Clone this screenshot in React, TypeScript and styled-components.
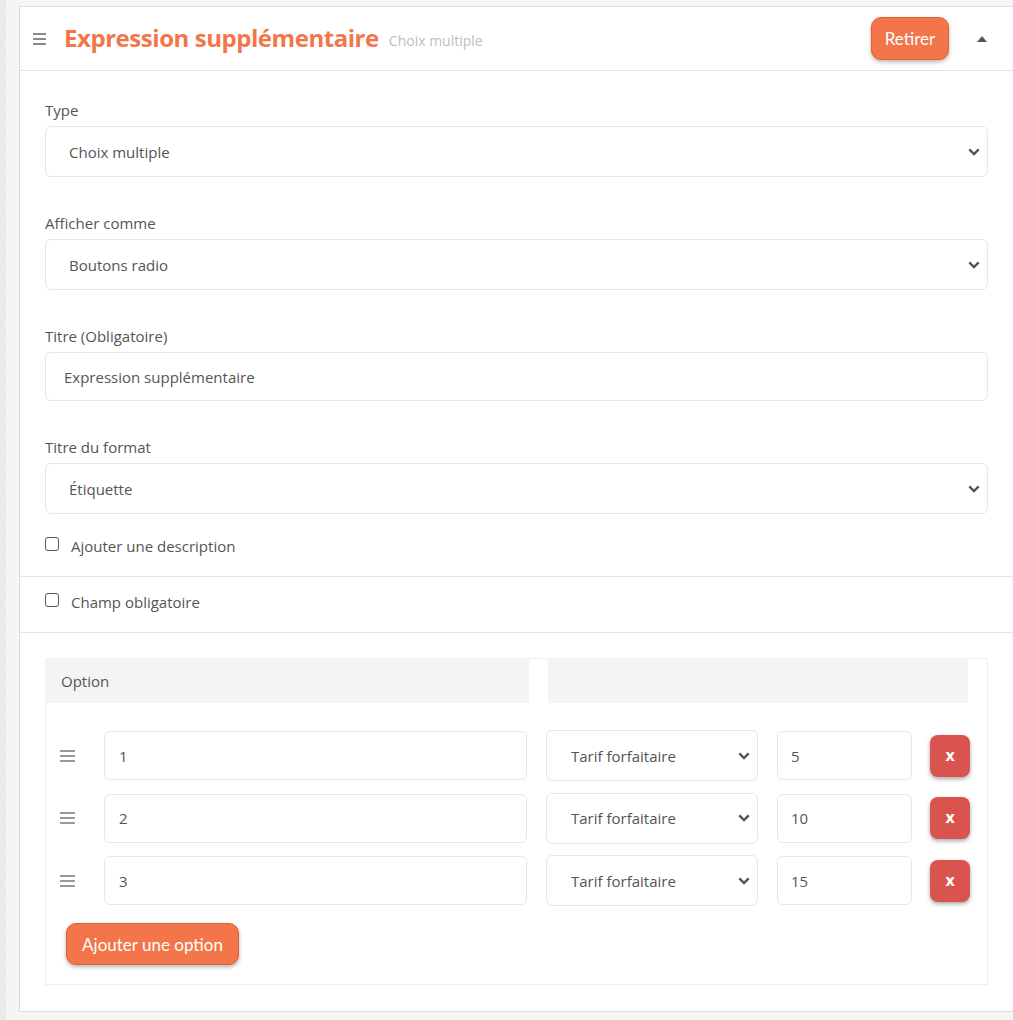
import React from "react";
import styled, { createGlobalStyle } from "styled-components";

const Global = createGlobalStyle`
  html, body { margin: 0; padding: 0; }
  body {
    background: #f5f5f5;
    font-family: "Open Sans", "Noto Sans", sans-serif;
    color: #555;
    overflow: hidden;
  }
`;

const Page = styled.div`
  display: flex;
  width: 1013px;
  height: 1020px;
  overflow: hidden;
`;

const Strip = styled.div`
  width: 6px;
  flex: none;
  background: repeating-linear-gradient(45deg, #e6e6e6 0 1px, #efefef 1px 2px);
`;

const Main = styled.div`
  flex: none;
  padding: 6px 0 0 13px;
`;

const Card = styled.section`
  width: 1000px;
  background: #fff;
  border: 1px solid #dedede;
  box-sizing: border-box;
`;

const Header = styled.header`
  display: flex;
  align-items: center;
  height: 63px;
  padding: 0 0 0 13px;
  border-bottom: 1px solid #e2e2e2;
`;

const Title = styled.h2`
  margin: -2px 0 0 18px;
  font-family: "Open Sans", sans-serif;
  font-weight: 700;
  font-size: 24px;
  letter-spacing: -0.45px;
  color: #f2764a;
  line-height: 1;
`;

const Subtitle = styled.span`
  margin-left: 10px;
  margin-top: 3px;
  font-size: 14px;
  color: #bdbdbd;
`;

const Spacer = styled.div`
  flex: 1;
`;

const OrangeButton = styled.button<{ $w: number; $h: number }>`
  width: ${(p) => p.$w}px;
  height: ${(p) => p.$h}px;
  background: #f2764a;
  border: 1px solid #e0603a;
  border-radius: 10px;
  color: #fff;
  font-family: Lato, sans-serif;
  font-size: 17px;
  box-shadow: 0 2px 4px rgba(0, 0, 0, 0.3);
  padding: 0;
  cursor: pointer;
`;

const Caret = styled.span`
  width: 0;
  height: 0;
  margin: 0 31px 0 28px;
  border-left: 5px solid transparent;
  border-right: 5px solid transparent;
  border-bottom: 6px solid #555;
`;

const Body = styled.div`
  padding: 28px 30px 0 25px;
`;

const Field = styled.div`
  display: flex;
  flex-direction: column;
  gap: 5px;
  & + & {
    margin-top: 35px;
  }
`;

const Label = styled.label`
  font-size: 15px;
  line-height: 22px;
  color: #555;
`;

const chevron = `url("data:image/svg+xml;utf8,<svg xmlns='http://www.w3.org/2000/svg' width='12' height='8' viewBox='0 0 12 8'><path d='M1.3 1.3 L6 6 L10.7 1.3' fill='none' stroke='%23555' stroke-width='2.4'/></svg>")`;

const Select = styled.select<{ $pad?: number; $w?: number }>`
  appearance: none;
  width: ${(p) => (p.$w ? `${p.$w}px` : "100%")};
  height: 51px;
  box-sizing: border-box;
  border: 1px solid #e6e6ee;
  border-radius: 6px;
  background: #fff ${chevron} no-repeat right 7px center / 12px 8px;
  padding: 0 20px 0 ${(p) => p.$pad ?? 23}px;
  font-family: "Open Sans", sans-serif;
  font-size: 15px;
  color: #555;
  outline: none;
`;

const Input = styled.input<{ $pad?: number }>`
  width: 100%;
  height: 49px;
  box-sizing: border-box;
  border: 1px solid #e6e6ee;
  border-radius: 6px;
  background: #fff;
  padding: 0 10px 0 ${(p) => p.$pad ?? 18}px;
  font-family: "Open Sans", sans-serif;
  font-size: 15px;
  color: #555;
  outline: none;
`;

const CheckRow = styled.label<{ $top: number; $bottom: number }>`
  display: flex;
  align-items: center;
  gap: 12px;
  padding: ${(p) => p.$top}px 0 ${(p) => p.$bottom}px;
  font-size: 15px;
  line-height: 22px;
  color: #555;
`;

const CheckBox = styled.input`
  appearance: none;
  width: 14px;
  height: 14px;
  margin: -4px 0 0;
  border: 1.5px solid #555;
  border-radius: 3px;
  box-sizing: border-box;
  background: #fff;
`;

const Divider = styled.div`
  border-top: 1px solid #e4e4e4;
`;

const SectionPad = styled.div`
  padding: 0 30px 0 25px;
`;

const OptionsWrap = styled.div`
  margin: 25px 30px 26px 25px;
  border: 1px solid #eeeeee;
  padding-bottom: 19px;
`;

const HeadRow = styled.div`
  display: grid;
  grid-template-columns: 484px 420px;
  column-gap: 19px;
  margin: -1px 0 0 -1px;
`;

const HeadCell = styled.div`
  height: 45px;
  background: #f4f4f4;
  display: flex;
  align-items: center;
  padding-left: 16px;
  font-size: 15px;
  color: #555;
`;

const Rows = styled.div`
  display: flex;
  flex-direction: column;
  gap: 11.5px;
  padding: 27px 0 0 14px;
`;

const Row = styled.div`
  display: grid;
  grid-template-columns: 25px 423px 212px 135px 40px;
  column-gap: 19px;
  align-items: center;
`;

const Handle = styled.span`
  display: flex;
  flex-direction: column;
  gap: 3px;
  width: 15px;
  & > i {
    display: block;
    height: 2px;
    background: #999;
  }
`;

const HeaderHandle = styled(Handle)`
  width: 13px;
  & > i { background: #8a8a8a; }
`;

const DeleteButton = styled.button`
  width: 40px;
  height: 42px;
  border: none;
  border-radius: 8px;
  background: #d9534f;
  color: #fff;
  font-family: "Open Sans", sans-serif;
  font-weight: 700;
  font-size: 16px;
  box-shadow: 0 2px 4px rgba(0, 0, 0, 0.35);
  padding: 0 0 2px;
  margin-left: -1px;
`;

const AddWrap = styled.div`
  padding: 17px 0 0 20px;
`;

const options = [
  { v: "1", p: "5" },
  { v: "2", p: "10" },
  { v: "3", p: "15" },
];

export default function App() {
  return (
    <>
      <Global />
      <Page>
        <Strip />
        <Main>
          <Card>
            <Header>
              <HeaderHandle>
                <i />
                <i />
                <i />
              </HeaderHandle>
              <Title>Expression supplémentaire</Title>
              <Subtitle>Choix multiple</Subtitle>
              <Spacer />
              <OrangeButton $w={78} $h={43}>Retirer</OrangeButton>
              <Caret />
            </Header>
            <Body>
              <Field>
                <Label>Type</Label>
                <Select defaultValue="a">
                  <option value="a">Choix multiple</option>
                </Select>
              </Field>
              <Field>
                <Label>Afficher comme</Label>
                <Select defaultValue="a">
                  <option value="a">Boutons radio</option>
                </Select>
              </Field>
              <Field>
                <Label>Titre (Obligatoire)</Label>
                <Input defaultValue="Expression supplémentaire" />
              </Field>
              <Field>
                <Label>Titre du format</Label>
                <Select defaultValue="a">
                  <option value="a">Étiquette</option>
                </Select>
              </Field>
              <CheckRow $top={21} $bottom={19}>
                <CheckBox type="checkbox" />
                Ajouter une description
              </CheckRow>
            </Body>
            <Divider />
            <SectionPad>
              <CheckRow $top={14} $bottom={19}>
                <CheckBox type="checkbox" />
                Champ obligatoire
              </CheckRow>
            </SectionPad>
            <Divider />
            <OptionsWrap>
              <HeadRow>
                <HeadCell>Option</HeadCell>
                <HeadCell />
              </HeadRow>
              <Rows>
                {options.map((o) => (
                  <Row key={o.v}>
                    <Handle>
                      <i />
                      <i />
                      <i />
                    </Handle>
                    <Input $pad={14} defaultValue={o.v} />
                    <Select $pad={24} $w={212} defaultValue="a">
                      <option value="a">Tarif forfaitaire</option>
                    </Select>
                    <Input $pad={13} defaultValue={o.p} />
                    <DeleteButton>x</DeleteButton>
                  </Row>
                ))}
              </Rows>
              <AddWrap>
                <OrangeButton $w={173} $h={42}>Ajouter une option</OrangeButton>
              </AddWrap>
            </OptionsWrap>
          </Card>
        </Main>
      </Page>
    </>
  );
}
